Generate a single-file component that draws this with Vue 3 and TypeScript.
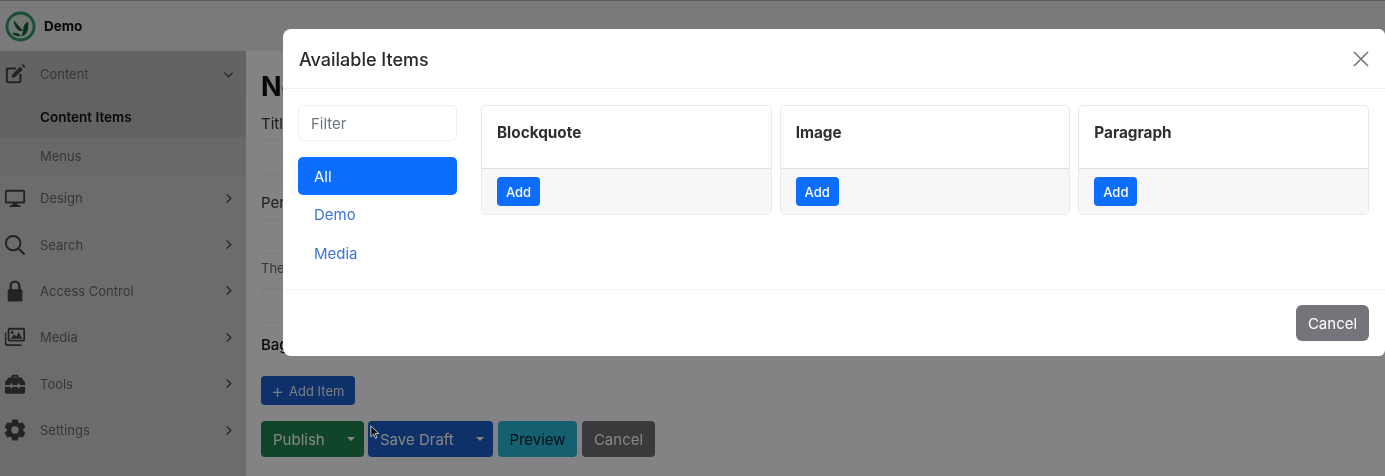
<script setup lang="ts">
function gearPath(): string {
  const points: string[] = [];
  for (let i = 0; i < 6; i++) {
    const a = (i * Math.PI) / 3 - Math.PI / 2;
    const at = (r: number, off: number) =>
      `${(12 + r * Math.cos(a + off)).toFixed(2)} ${(12 + r * Math.sin(a + off)).toFixed(2)}`;
    points.push(at(8.6, -0.5), at(11.8, -0.24), at(11.8, 0.24), at(8.6, 0.5));
  }
  return `M${points.join("L")}zM12 8a4 4 0 1 0 0 8 4 4 0 0 0 0-8z`;
}

const icons: Record<string, string> = {
  edit: "M4 5h9v2.2H5a.8.8 0 0 0-.8.8v11c0 .4.4.8.8.8h11c.4 0 .8-.4.8-.8v-7h2.2v8a2 2 0 0 1-2 2H4a2 2 0 0 1-2-2V7a2 2 0 0 1 2-2zM9 12.5 17.5 4l3 3L12 15.5l-3.6.6zM19 2.5l.9-.9a1 1 0 0 1 1.4 0l1.6 1.6a1 1 0 0 1 0 1.4l-.9.9z",
  desktop: "M3 3h18a2 2 0 0 1 2 2v11a2 2 0 0 1-2 2h-6.5l.5 2h3v1.8H6V20h3l.5-2H3a2 2 0 0 1-2-2V5a2 2 0 0 1 2-2zm0 2.2v10.6h18V5.2z",
  search: "M10 1a9 9 0 1 1 0 18 9 9 0 0 1 0-18zm0 2.2a6.8 6.8 0 1 0 0 13.6 6.8 6.8 0 0 0 0-13.6zM15.6 17.2l1.6-1.6 6 6-1.6 1.6z",
  lock: "M12 .5a6 6 0 0 1 6 6V10h.5a1.5 1.5 0 0 1 1.5 1.5V22a1.5 1.5 0 0 1-1.5 1.5h-13A1.5 1.5 0 0 1 4 22V11.5A1.5 1.5 0 0 1 5.5 10H6V6.5a6 6 0 0 1 6-6zM8.6 10h6.8V6.5a3.4 3.4 0 0 0-6.8 0z",
  images: "M6 2h15a2 2 0 0 1 2 2v11a2 2 0 0 1-2 2H6a2 2 0 0 1-2-2V4a2 2 0 0 1 2-2zm0 2v11h15V4zM7 14l4-5 2.5 2.5L16 6.500l4 7.500zM9 5.500a1.600 1.600 0 1 1 0 3.200 1.600 1.600 0 0 1 0-3.200zM1 7h1.500v11a2 2 0 0 0 2 2H19v1.800H3a2 2 0 0 1-2-2z",
  toolbox: "M8 5V4a2 2 0 0 1 2-2h4a2 2 0 0 1 2 2v1h3l4 5v3h-6v-1.500h-2V13H9v-1.500H7V13H1v-3l4-5zm2 0h4V4h-4zM1 15h6v1.500h2V15h6v1.500h2V15h6v6a1.500 1.500 0 0 1-1.500 1.500h-19A1.500 1.500 0 0 1 1 21z",
  cog: gearPath(),
};

const navItems = [
  { label: "Design", icon: "desktop" },
  { label: "Search", icon: "search" },
  { label: "Access Control", icon: "lock" },
  { label: "Media", icon: "images" },
  { label: "Tools", icon: "toolbox" },
  { label: "Settings", icon: "cog" },
];

const categories = ["All", "Demo", "Media"];
const cards = ["Blockquote", "Image", "Paragraph"];
</script>

<template>
  <div class="page">
    <header class="topbar">
      <svg class="logo" viewBox="0 0 32 32" aria-hidden="true">
        <circle cx="16" cy="16" r="14" fill="#d8e4dc" stroke="#2f9a68" stroke-width="3" />
        <path d="M17 26c5-1 8-6 6.800-15-3.600 1.400-5.200 5-5 9.500z" fill="#1c5c3e" />
        <path d="M18.500 20.500 9 9.500c-.4 4 2.500 9.500 7 11.500z" fill="#1c5c3e" />
        <path d="M16.500 25.500c-2.500-2.800-5.500-3.700-9-2.700 2 3 5.500 3.900 9 2.700z" fill="#1c5c3e" />
      </svg>
      <strong class="brand">Demo</strong>
    </header>

    <div class="shell">
      <aside class="sidebar">
        <section class="nav-open">
          <div class="nav-row">
            <svg class="nav-icon" viewBox="0 0 24 24" aria-hidden="true">
              <path :d="icons.edit" fill-rule="evenodd" />
            </svg>
            <span class="nav-label">Content</span>
            <svg class="chevron" viewBox="0 0 12 12" aria-hidden="true">
              <path d="M1.500 4l4.500 4.500L10.500 4" />
            </svg>
          </div>
          <a class="sub-item sub-item--active">Content Items</a>
          <a class="sub-item">Menus</a>
        </section>
        <div v-for="item in navItems" :key="item.label" class="nav-row">
          <svg class="nav-icon" viewBox="0 0 24 24" aria-hidden="true">
            <path :d="icons[item.icon]" fill-rule="evenodd" />
          </svg>
          <span class="nav-label">{{ item.label }}</span>
          <svg class="chevron" viewBox="0 0 12 12" aria-hidden="true">
            <path d="M4 1.500 8.500 6 4 10.500" />
          </svg>
        </div>
      </aside>

      <main class="content">
        <h1>New Page</h1>
        <label class="field-label">Title</label>
        <div class="field-input"></div>
        <label class="field-label field-label--gap">Permalink</label>
        <div class="field-input"></div>
        <p class="hint">The permalink</p>
        <div class="field-input field-input--short"></div>
        <label class="field-label field-label--bold">Bag Items</label>
        <button class="btn btn--add-item" type="button"><span class="plus">+</span>Add Item</button>
        <div class="actions">
          <button class="btn btn--publish" type="button">Publish<i class="caret"></i></button>
          <button class="btn btn--draft" type="button">Save Draft<i class="caret"></i></button>
          <button class="btn btn--preview" type="button">Preview</button>
          <button class="btn btn--back" type="button">Cancel</button>
        </div>
      </main>
    </div>

    <div class="backdrop"></div>

    <div class="modal" role="dialog" aria-label="Available Items">
      <div class="modal-header">
        <h2>Available Items</h2>
        <svg class="close" viewBox="0 0 16 16" aria-label="Close">
          <path d="M1 1l14 14M15 1 1 15" />
        </svg>
      </div>
      <div class="modal-body">
        <div class="filter-col">
          <input class="filter" type="text" placeholder="Filter" />
          <ul class="category-list">
            <li
              v-for="(cat, i) in categories"
              :key="cat"
              :class="['category', { 'category--active': i === 0 }]"
            >
              {{ cat }}
            </li>
          </ul>
        </div>
        <div class="card-grid">
          <article v-for="card in cards" :key="card" class="card">
            <h3>{{ card }}</h3>
            <div class="card-footer">
              <button class="add" type="button">Add</button>
            </div>
          </article>
        </div>
      </div>
      <div class="modal-footer">
        <button class="cancel" type="button">Cancel</button>
      </div>
    </div>

    <svg class="cursor" viewBox="0 0 12 18" aria-hidden="true">
      <path d="M1 1v13l3.200-3 2.200 5 2-.9-2.200-4.900H10.500z" fill="#111" stroke="#ddd" stroke-width="1" />
    </svg>
  </div>
</template>

<style scoped>
.page {
  position: relative;
  width: 1385px;
  height: 476px;
  overflow: hidden;
  background: #fbf9fd;
  font-family: Inter, "Liberation Sans", sans-serif;
  color: #212529;
  filter: blur(0.35px);
}

.topbar {
  height: 51px;
  display: flex;
  align-items: center;
  gap: 8px;
  padding-left: 5px;
  box-sizing: border-box;
  background: #eae8ec;
  border-top: 1px solid #b0aeb2;
}

.logo {
  width: 31px;
  height: 31px;
}

.brand {
  font-size: 13.500px;
  font-weight: 700;
  color: #111;
}

.shell {
  display: flex;
  height: 425px;
}

.sidebar {
  width: 246px;
  flex: none;
  background: #d0ced2;
}

.nav-open {
  background: #bfbdc1;
  height: 124px;
}

.nav-row {
  height: 46.400px;
  display: flex;
  align-items: center;
  padding: 0 12px 0 4px;
  color: #6a686b;
}

.nav-open .nav-row {
  height: 46px;
}

.nav-icon {
  width: 22px;
  height: 22px;
  flex: none;
  fill: #454346;
}

.nav-label {
  margin-left: 14px;
  font-size: 13px;
  flex: 1;
}

.chevron {
  width: 11px;
  height: 11px;
  fill: none;
  stroke: #454346;
  stroke-width: 1.400;
}

.sub-item {
  display: flex;
  align-items: center;
  height: 38px;
  padding-left: 40px;
  font-size: 13px;
  color: #6a686b;
  background: #c8c6ca;
}

.sub-item--active {
  height: 40px;
  background: #bcbac0;
  font-size: 13.500px;
  font-weight: 600;
  color: #111;
}

.content {
  flex: 1;
  padding: 21px 15px 0;
  min-width: 0;
}

.content h1 {
  margin: 0;
  height: 30px;
  font-size: 27px;
  line-height: 30px;
  font-weight: 700;
  color: #111;
}

.field-label {
  display: block;
  margin-top: 12px;
  font-size: 15px;
  line-height: 20px;
  color: #3a383b;
}

.field-label--gap {
  margin-top: 18px;
}

.field-label--bold {
  margin-top: 12px;
  font-weight: 500;
  color: #111;
}

.field-input {
  height: 35px;
  margin-top: 6px;
  box-sizing: border-box;
  border: 1px solid #f0eef2;
  border-radius: 4px;
}

.field-input--short {
  margin-top: 11px;
}

.hint {
  margin: 5px 0 0;
  font-size: 13px;
  line-height: 18px;
  color: #6c6a6e;
}

.btn {
  display: inline-flex;
  align-items: center;
  box-sizing: border-box;
  height: 36px;
  padding: 0 12px;
  border: 0;
  border-radius: 4px;
  font: 400 15px Inter, "Liberation Sans", sans-serif;
  color: #fff;
  white-space: nowrap;
}

.btn--add-item {
  display: flex;
  width: 94px;
  height: 29px;
  margin-top: 21px;
  padding: 0 0 0 10px;
  gap: 5px;
  font-size: 13px;
  background: #1a5fc8;
  color: #e8eefc;
}

.plus {
  font-size: 20px;
  line-height: 1;
  font-weight: 300;
}

.actions {
  display: flex;
  gap: 4px;
  margin-top: 16px;
}

.btn--publish {
  width: 103px;
  padding-right: 9px;
  background: #228552;
}

.btn--draft {
  width: 125px;
  padding-right: 9px;
  background: #1a5fc8;
}

.btn--preview {
  width: 79px;
  margin-left: 1px;
  justify-content: center;
  background: #28b8d6;
  color: #021a30;
}

.btn--back {
  width: 73px;
  justify-content: center;
  margin-left: 1px;
  background: #6f6e73;
}

.caret {
  margin-left: auto;
  border-top: 4px solid #fff;
  border-left: 4px solid transparent;
  border-right: 4px solid transparent;
}

.backdrop {
  position: absolute;
  inset: 0;
  background: rgb(0 0 0 / 48%);
}

.modal {
  position: absolute;
  top: 29px;
  left: 283px;
  width: 1102px;
  height: 327px;
  display: flex;
  flex-direction: column;
  background: #fff;
  border-radius: 8px 6px 6px 8px;
}

.modal-header {
  height: 60px;
  flex: none;
  box-sizing: border-box;
  display: flex;
  align-items: center;
  justify-content: space-between;
  padding: 0 16px;
  border-bottom: 1px solid #eeedf0;
}

.modal-header h2 {
  margin: 1px 0 0;
  font-size: 18px;
  font-weight: 500;
  color: #2a282b;
}

.close {
  width: 16px;
  height: 16px;
  fill: none;
  stroke: #79777b;
  stroke-width: 1.700;
}

.modal-body {
  flex: 1;
  display: flex;
  gap: 24px;
  padding: 16px 16px 0 15px;
}

.filter-col {
  width: 159px;
  flex: none;
}

.filter {
  display: block;
  width: 100%;
  height: 36px;
  box-sizing: border-box;
  padding: 0 12px;
  border: 1px solid #eeedf0;
  border-radius: 5px;
  font: 400 15px Inter, "Liberation Sans", sans-serif;
  color: #212529;
  outline: none;
}

.filter::placeholder {
  color: #6c757d;
}

.category-list {
  list-style: none;
  margin: 16px 0 0;
  padding: 0;
}

.category {
  height: 39px;
  display: flex;
  align-items: center;
  padding-left: 16px;
  font-size: 15px;
  color: #3a75dc;
}

.category--active {
  height: 38px;
  border-radius: 5px;
  background: #0d6efd;
  color: #fff;
}

.card-grid {
  flex: 1;
  display: grid;
  grid-template-columns: repeat(3, 1fr);
  gap: 8px;
  align-items: start;
}

.card {
  height: 110px;
  box-sizing: border-box;
  display: flex;
  flex-direction: column;
  border: 1px solid #e9e8eb;
  border-radius: 5px;
  overflow: hidden;
}

.card h3 {
  flex: 1;
  margin: 0;
  padding: 18px 15px 0;
  font-size: 15.300px;
  line-height: 18px;
  font-weight: 700;
  color: #2f2d30;
}

.card-footer {
  height: 46px;
  flex: none;
  box-sizing: border-box;
  padding: 8px 15px;
  background: #f8f6f9;
  border-top: 1px solid #dedde0;
}

.add {
  display: block;
  width: 43px;
  height: 29px;
  padding: 0;
  border: 0;
  border-radius: 4px;
  background: #0d6efd;
  color: #fff;
  font: 500 13px Inter, "Liberation Sans", sans-serif;
}

.modal-footer {
  height: 67px;
  flex: none;
  box-sizing: border-box;
  display: flex;
  align-items: center;
  justify-content: flex-end;
  padding: 0 16px;
  border-top: 1px solid #f2f1f3;
}

.cancel {
  width: 73px;
  height: 36px;
  border: 0;
  border-radius: 6px;
  background: #73757a;
  color: #fff;
  font: 400 15px Inter, "Liberation Sans", sans-serif;
}

.cursor {
  position: absolute;
  left: 370px;
  top: 425px;
  width: 10px;
  height: 15px;
}
</style>
